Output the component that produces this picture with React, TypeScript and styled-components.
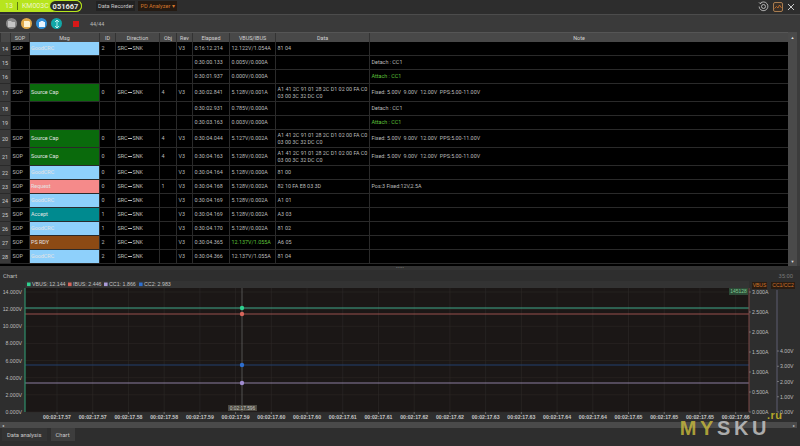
import React from "react";
import styled, { createGlobalStyle } from "styled-components";

const GlobalStyle = createGlobalStyle`
  html, body {
    margin: 0;
    padding: 0;
    background: #2e2e2e;
    overflow: hidden;
  }
`;

const COLUMNS = "10px 19px 70px 16px 44px 17px 16px 37px 46px 94px 419px";

const Page = styled.div`
  position: relative;
  width: 800px;
  height: 446px;
  display: flex;
  flex-direction: column;
  overflow: hidden;
  background: #2e2e2e;
  font-family: Roboto, "Liberation Sans", sans-serif;
  font-size: 5.4px;
  color: #bcbcbc;
`;

const TitleBar = styled.header`
  height: 14px;
  flex: none;
  display: flex;
  align-items: flex-start;
  background: #2d2d2d;
`;

const DeviceBadge = styled.div`
  width: 82px;
  height: 12px;
  box-sizing: border-box;
  display: flex;
  align-items: center;
  padding-left: 5px;
  background: #b7e51e;
  border-radius: 0 6px 6px 0;
  color: #eef5c4;
  font-size: 7px;
`;

const DeviceSerial = styled.span`
  margin-left: auto;
  width: 32px;
  height: 12px;
  box-sizing: border-box;
  display: flex;
  align-items: center;
  justify-content: center;
  background: #2a2a22;
  border: 1px solid #b7e51e;
  border-left: none;
  border-radius: 6px;
  color: #e8e8e8;
  font-size: 7.5px;
  font-weight: 700;
`;

const DeviceDivider = styled.span`
  width: 1px;
  height: 8px;
  margin: 0 4px;
  background: #5d7a10;
`;

const TopTab = styled.span<{ $active?: boolean }>`
  height: 10px;
  margin: 1px 0 0 ${(p) => (p.$active ? "3px" : "14px")};
  padding: 0 2px;
  display: flex;
  align-items: center;
  background: ${(p) => (p.$active ? "#241a12" : "#222222")};
  color: ${(p) => (p.$active ? "#d2752a" : "#c8c8c8")};
  font-size: 5.6px;
`;

const WindowButtons = styled.div`
  margin-left: auto;
  padding-right: 5px;
  display: flex;
  align-items: center;
  gap: 4px;
  height: 13px;
  color: #cfcfcf;
`;

const Toolbar = styled.div`
  height: 18px;
  flex: none;
  box-sizing: border-box;
  display: flex;
  align-items: center;
  padding-left: 6px;
  background: #3a3a3a;
  border-top: 1px solid #4c4c4c;
`;

const ToolButton = styled.span<{ $color: string }>`
  width: 11px;
  height: 11px;
  margin-right: 4px;
  display: flex;
  align-items: center;
  justify-content: center;
  border-radius: 50%;
  background: ${(p) => p.$color};
`;

const StopButton = styled.span`
  width: 6px;
  height: 6px;
  margin: 0 11px 0 7px;
  background: #d81818;
`;

const TableWrap = styled.div`
  height: 234px;
  flex: none;
  display: flex;
  background: #3c3c3c;
`;

const Table = styled.div`
  width: 788px;
  flex: none;
  background: #000;
`;

const HeaderRow = styled.div`
  height: 10px;
  display: grid;
  grid-template-columns: ${COLUMNS};
  background: #484848;
  border-top: 1px solid #555;
  box-sizing: border-box;
`;

const HeaderCell = styled.div`
  display: flex;
  align-items: center;
  justify-content: center;
  border-left: 1px solid #333;
  color: #d2d2d2;
`;

const Row = styled.div<{ $tall?: boolean }>`
  height: ${(p) => (p.$tall ? "18px" : "14px")};
  display: grid;
  grid-template-columns: ${COLUMNS};
  border-bottom: 1px solid #2a2a2a;
  box-sizing: border-box;
`;

const NumCell = styled.div`
  display: flex;
  align-items: center;
  justify-content: center;
  background: #3a3a3a;
  color: #d0d0d0;
`;

const Cell = styled.div<{ $color?: string }>`
  display: flex;
  align-items: center;
  padding-left: 1.5px;
  line-height: 6.5px;
  white-space: pre;
  overflow: hidden;
  border-left: 1px solid #2a2a2a;
  color: ${(p) => p.$color ?? "#bcbcbc"};
`;

const MsgCell = styled(Cell)<{ $bg?: string }>`
  padding-left: 1px;
  background: ${(p) => p.$bg ?? "transparent"};
  color: #e4e4e4;
`;

const Arrow = styled.span`
  width: 4px;
  height: 0;
  margin: 0 0.5px;
  border-top: 0.6px solid #bcbcbc;
`;

const Scrollbar = styled.div`
  width: 9px;
  margin-right: 3px;
  flex: none;
  display: flex;
  flex-direction: column;
  justify-content: space-between;
  align-items: center;
  padding: 3px 0 2px;
  box-sizing: border-box;
  background: #4a4a4a;
  color: #ddd;
  font-size: 4px;
  line-height: 5px;
`;

const Splitter = styled.div`
  height: 4px;
  flex: none;
  display: flex;
  align-items: center;
  justify-content: center;
  background: #333;
  color: #888;
  font-size: 4px;
  letter-spacing: 0.3px;
  line-height: 4px;
`;

const ChartTitle = styled.div`
  height: 11px;
  flex: none;
  display: flex;
  align-items: center;
  justify-content: space-between;
  padding: 0 7px 0 3px;
  color: #bcbcbc;
  font-size: 5.8px;
`;

const ChartTime = styled.span`
  color: #777;
`;

const ChartPanel = styled.div`
  height: 147px;
  flex: none;
  display: flex;
  flex-direction: column;
`;

const ChartSvg = styled.svg`
  display: block;
  width: 800px;
  height: 138px;
  flex: none;
  font-family: "Liberation Sans", Arial, sans-serif;
`;

const ChartScroll = styled.div`
  height: 6px;
  margin: 3px 3px 0 0;
  flex: none;
  display: flex;
  align-items: center;
  justify-content: space-between;
  padding: 0 2px;
  background: #4a4a4a;
  color: #ccc;
  font-size: 4px;
`;

const TabBar = styled.div`
  height: 18px;
  flex: none;
  display: flex;
  align-items: flex-start;
  padding-left: 2px;
  gap: 4px;
`;

const BottomTab = styled.span<{ $active?: boolean }>`
  height: 13px;
  display: flex;
  align-items: center;
  padding: 0 5px;
  background: ${(p) => (p.$active ? "#3d3d3d" : "#333")};
  color: #c8c8c8;
  font-size: 5.8px;
`;

const Watermark = styled.div`
  position: absolute;
  right: 30px;
  bottom: 8px;
  font-family: "Liberation Sans", Arial, sans-serif;
  font-size: 20px;
  line-height: 20px;
  font-weight: 700;
  letter-spacing: 3.6px;
  color: rgba(195, 195, 195, 0.85);
`;

const WatermarkMy = styled.span`
  color: rgba(205, 190, 60, 0.8);
`;

const WatermarkRu = styled.span`
  position: absolute;
  left: 100%;
  top: -8px;
  margin-left: -3px;
  font-size: 11px;
  line-height: 11px;
  letter-spacing: 0.5px;
  color: #b5a52a;
`;

type Msg = {
  n: number;
  msg?: string;
  bg?: string;
  id?: string;
  obj?: string;
  time: string;
  vbus: string;
  vbusColor?: string;
  data?: string;
  note?: string;
  noteColor?: string;
};

const GOOD = "#8ed0fb";
const SRC = "#0a6a0c";
const CAPS = "A1 41 2C 91 01 28 2C D1 02 00 FA C0\n03 00 3C 32 DC C0";
const CAPS_NOTE = "Fixed: 5.00V  9.00V  12.00V  PPS:5.00-11.00V";

const rows: Msg[] = [
  { n: 14, msg: "GoodCRC", bg: GOOD, id: "2", time: "0:16:12.214", vbus: "12.122V/1.054A", data: "81 04" },
  { n: 15, time: "0:30:00.133", vbus: "0.005V/0.000A", note: "Detach : CC1" },
  { n: 16, time: "0:30:01.937", vbus: "0.000V/0.000A", note: "Attach : CC1", noteColor: "#5fc43a" },
  { n: 17, msg: "Source Cap", bg: SRC, id: "0", obj: "4", time: "0:30:02.841", vbus: "5.128V/0.001A", data: CAPS, note: CAPS_NOTE },
  { n: 18, time: "0:30:02.931", vbus: "0.785V/0.000A", note: "Detach : CC1" },
  { n: 19, time: "0:30:03.163", vbus: "0.003V/0.000A", note: "Attach : CC1", noteColor: "#5fc43a" },
  { n: 20, msg: "Source Cap", bg: SRC, id: "0", obj: "4", time: "0:30:04.044", vbus: "5.127V/0.002A", data: CAPS, note: CAPS_NOTE },
  { n: 21, msg: "Source Cap", bg: SRC, id: "0", obj: "4", time: "0:30:04.163", vbus: "5.128V/0.002A", data: CAPS, note: CAPS_NOTE },
  { n: 22, msg: "GoodCRC", bg: GOOD, id: "0", time: "0:30:04.164", vbus: "5.128V/0.000A", data: "81 00" },
  { n: 23, msg: "Request", bg: "#f58a8a", id: "0", obj: "1", time: "0:30:04.168", vbus: "5.128V/0.002A", data: "82 10 FA E8 03 3D", note: "Pos:3 Fixed:12V,2.5A" },
  { n: 24, msg: "GoodCRC", bg: GOOD, id: "0", time: "0:30:04.169", vbus: "5.128V/0.002A", data: "A1 01" },
  { n: 25, msg: "Accept", bg: "#008a8f", id: "1", time: "0:30:04.169", vbus: "5.128V/0.002A", data: "A3 03" },
  { n: 26, msg: "GoodCRC", bg: GOOD, id: "1", time: "0:30:04.170", vbus: "5.128V/0.002A", data: "81 02" },
  { n: 27, msg: "PS RDY", bg: "#8c4a14", id: "2", time: "0:30:04.365", vbus: "12.137V/1.055A", vbusColor: "#5fc43a", data: "A6 05" },
  { n: 28, msg: "GoodCRC", bg: GOOD, id: "2", time: "0:30:04.366", vbus: "12.137V/1.055A", data: "81 04" },
];

const headers = ["", "SOP", "Msg", "ID", "Direction", "Obj", "Rev", "Elapsed", "VBUS/IBUS", "Data", "Note"];

const xLabels = ["57", "57", "58", "58", "59", "59", "60", "60", "61", "61", "62", "62", "63", "63", "64", "64", "65", "65", "65", "66"];

// svg origin sits at y=281 of the page
const LEFT = 25;
const RIGHT = 749;
const TOP = 7;
const BOTTOM = 131;
const CURSOR = 242;

const Chart: React.FC = () => {
  const ticksX = xLabels.map((_, i) => 57 + i * 35.72);
  const leftLabels = ["14.000V", "12.000V", "10.000V", "8.000V", "6.000V", "4.000V", "2.000V", "0.000V"];
  const rightLabels = ["3.000A", "2.500A", "2.000A", "1.500A", "1.000A", "0.500A", "0.000A"];
  const ccLabels = ["4.00V", "3.00V", "2.00V", "1.00V", "0.00V"];
  const legend = [
    { x: 26, c: "#2fd08f", t: "VBUS: 12.144" },
    { x: 67, c: "#d8665c", t: "IBUS: 2.446" },
    { x: 103, c: "#a99ad8", t: "CC1: 1.866" },
    { x: 138, c: "#2e6fd0", t: "CC2: 2.983" },
  ];
  const series = [
    { y: 27, c: "#3fa98a", dot: "#2fd08f", w: 1 },
    { y: 33, c: "#b8605a", dot: "#d8665c", w: 0.8 },
    { y: 84, c: "#23406e", dot: "#2e6fd0", w: 1 },
    { y: 102, c: "#a89ac4", dot: "#a08cd0", w: 0.8 },
  ];

  return (
    <ChartSvg viewBox="0 0 800 138">
      <rect x={LEFT} y={0} width={RIGHT - LEFT} height={7} fill="#333" />
      <rect x={LEFT} y={TOP} width={RIGHT - LEFT} height={BOTTOM - TOP} fill="#1b1716" />
      {legend.map((l) => (
        <g key={l.t}>
          <rect x={l.x + 1} y={1.5} width={3.6} height={3.6} fill={l.c} />
          <text x={l.x + 6} y={5.2} fontSize={5.3} fill="#c0c0c0">{l.t}</text>
        </g>
      ))}
      {leftLabels.map((t, i) => (
        <g key={t}>
          <line x1={LEFT} x2={RIGHT} y1={11 + i * 17.14} y2={11 + i * 17.14} stroke="#2e2825" strokeWidth={0.6} />
          <text x={22} y={13 + i * 17.14} fontSize={5.2} fill="#bdbdbd" textAnchor="end">{t}</text>
        </g>
      ))}
      {ticksX.map((x, i) => (
        <g key={x}>
          <line x1={x} x2={x} y1={TOP} y2={BOTTOM} stroke="#2e2a28" strokeWidth={0.6} />
          <line x1={x} x2={x} y1={BOTTOM} y2={BOTTOM + 2} stroke="#999" strokeWidth={0.6} />
          <text x={x} y={138} fontSize={5.2} fontWeight={700} fill="#c6c6c6" textAnchor="middle">
            {"00:02:17." + xLabels[i]}
          </text>
        </g>
      ))}
      {series.map((s) => (
        <line key={s.y} x1={LEFT} x2={RIGHT} y1={s.y} y2={s.y} stroke={s.c} strokeWidth={s.w} />
      ))}
      <line x1={CURSOR} x2={CURSOR} y1={TOP} y2={BOTTOM} stroke="#7a7a7a" strokeWidth={0.6} />
      {series.map((s) => (
        <circle key={s.y} cx={CURSOR} cy={s.y} r={2.2} fill={s.dot} />
      ))}
      <line x1={LEFT} x2={LEFT} y1={TOP} y2={BOTTOM} stroke="#2f8f6c" strokeWidth={1.2} />
      <line x1={RIGHT} x2={RIGHT} y1={TOP} y2={BOTTOM} stroke="#7c4a48" strokeWidth={1} />
      <line x1={777} x2={777} y1={9} y2={BOTTOM} stroke="#5c5c70" strokeWidth={1} />
      {rightLabels.map((t, i) => (
        <g key={t}>
          <line x1={RIGHT} x2={RIGHT + 2} y1={11 + i * 20} y2={11 + i * 20} stroke="#999" strokeWidth={0.6} />
          <text x={752} y={13 + i * 20} fontSize={5.2} fill="#bdbdbd">{t}</text>
        </g>
      ))}
      {ccLabels.map((t, i) => (
        <g key={t}>
          <line x1={777} x2={779} y1={70 + i * 15.25} y2={70 + i * 15.25} stroke="#999" strokeWidth={0.6} />
          <text x={780} y={72 + i * 15.25} fontSize={5.2} fill="#bdbdbd">{t}</text>
        </g>
      ))}
      <rect x={729} y={7} width={19} height={7} fill="#2c4a36" />
      <text x={738.5} y={12.4} fontSize={5} fill="#7fc88f" textAnchor="middle">145128</text>
      <rect x={752} y={1} width={15} height={7} fill="#2a1c12" />
      <text x={759.5} y={6.4} fontSize={5} fill="#d2752a" textAnchor="middle">VBUS</text>
      <rect x={771} y={1} width={24} height={7} fill="#2a1c12" />
      <text x={783} y={6.4} fontSize={5} fill="#d2752a" textAnchor="middle">CC1/CC2</text>
      <rect x={CURSOR - 14} y={124} width={29} height={6} fill="#4c4a42" />
      <text x={CURSOR + 0.5} y={128.8} fontSize={4.8} fill="#c8c8c0" textAnchor="middle">0:02:17.596</text>
    </ChartSvg>
  );
};

const App: React.FC = () => (
  <Page>
    <GlobalStyle />
    <TitleBar>
      <DeviceBadge>
        13
        <DeviceDivider />
        KM003C
        <DeviceSerial>051667</DeviceSerial>
      </DeviceBadge>
      <TopTab>Data Recorder</TopTab>
      <TopTab $active>PD Analyzer ▾</TopTab>
      <WindowButtons>
        <svg width="11" height="11" viewBox="0 0 11 11" fill="none" stroke="#cfcfcf" strokeWidth="0.8">
          <path d="M2.2 2.4A4.4 4.4 0 1 1 1.1 5.5" />
          <path d="M1 1.4l1.2 1.3 1.4-.9" />
          <circle cx="5.5" cy="5.5" r="2" />
        </svg>
        <svg width="10" height="10" viewBox="0 0 10 10" fill="none">
          <rect x="0.5" y="0.5" width="9" height="9" rx="1.5" fill="#3a3028" stroke="#c8925a" strokeWidth="0.8" />
          <path d="M1.5 6.5l2-2 1.5 1.5 1.5-3 2 3" stroke="#d2752a" strokeWidth="0.8" />
        </svg>
        <svg width="8" height="8" viewBox="0 0 8 8" stroke="#dcdcdc" strokeWidth="0.9">
          <path d="M1 1l6 6M7 1L1 7" />
        </svg>
      </WindowButtons>
    </TitleBar>
    <Toolbar>
      <ToolButton $color="#8a8a8a">
        <svg width="7" height="6" viewBox="0 0 7 6" fill="#c4c4c4">
          <path d="M0 0h3l1 1h3v5H0z" />
        </svg>
      </ToolButton>
      <ToolButton $color="#e0a84a">
        <svg width="6" height="6" viewBox="0 0 6 6" fill="#fff2d0">
          <path d="M0 0h5l1 1v5H0z" />
        </svg>
      </ToolButton>
      <ToolButton $color="#2f8fd8">
        <svg width="6" height="6" viewBox="0 0 6 6" fill="#e8f4ff">
          <path d="M0 1h1.5V0h3v1H6v5H0z" />
        </svg>
      </ToolButton>
      <ToolButton $color="#12a8a8">
        <svg width="6" height="8" viewBox="0 0 6 8" fill="none" stroke="#e0ffff" strokeWidth="0.8">
          <path d="M3 0v8M1 2l2-2 2 2M1 6l2 2 2-2" />
        </svg>
      </ToolButton>
      <StopButton />
      <span>44/44</span>
    </Toolbar>
    <TableWrap>
      <Table>
        <HeaderRow>
          {headers.map((h, i) => (
            <HeaderCell key={i}>{h}</HeaderCell>
          ))}
        </HeaderRow>
        {rows.map((r) => (
          <Row key={r.n} $tall={r.data === CAPS}>
            <NumCell>{r.n}</NumCell>
            <Cell>{r.msg ? "SOP" : ""}</Cell>
            <MsgCell $bg={r.bg}>{r.msg}</MsgCell>
            <Cell>{r.id}</Cell>
            <Cell>
              {r.msg && (
                <>
                  SRC
                  <Arrow />
                  SNK
                </>
              )}
            </Cell>
            <Cell>{r.obj}</Cell>
            <Cell>{r.msg ? "V3" : ""}</Cell>
            <Cell>{r.time}</Cell>
            <Cell $color={r.vbusColor}>{r.vbus}</Cell>
            <Cell>{r.data}</Cell>
            <Cell $color={r.noteColor}>{r.note}</Cell>
          </Row>
        ))}
      </Table>
      <Scrollbar>
        <span>▲</span>
        <span>▼</span>
      </Scrollbar>
    </TableWrap>
    <Splitter>•••••</Splitter>
    <ChartTitle>
      Chart
      <ChartTime>35:00</ChartTime>
    </ChartTitle>
    <ChartPanel>
      <Chart />
      <ChartScroll>
        <span>◂</span>
        <span>▸</span>
      </ChartScroll>
    </ChartPanel>
    <TabBar>
      <BottomTab>Data analysis</BottomTab>
      <BottomTab $active>Chart</BottomTab>
    </TabBar>
    <Watermark>
      <WatermarkMy>MY</WatermarkMy>SKU
      <WatermarkRu>.ru</WatermarkRu>
    </Watermark>
  </Page>
);

export default App;
